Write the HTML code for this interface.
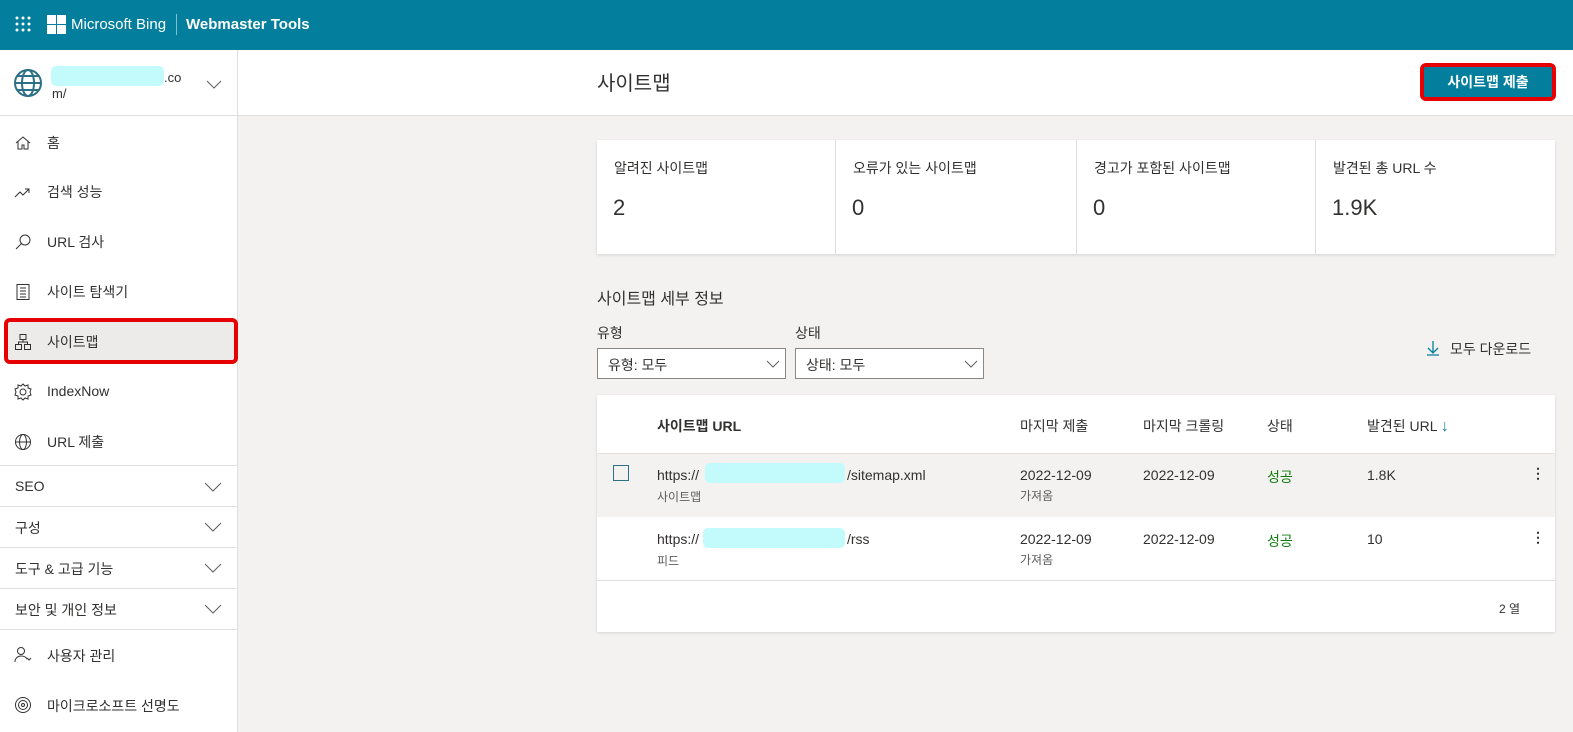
<!DOCTYPE html><html><head><meta charset="utf-8"><style>
*{box-sizing:border-box;margin:0;padding:0}
body{width:1573px;height:732px;overflow:hidden;font-family:"Liberation Sans","Noto Sans CJK KR",sans-serif;background:#f3f2f1;color:#323130;position:relative;font-size:14px}
.a{position:absolute}
.hdr{left:0;top:0;width:1573px;height:50px;background:#037f9d;color:#fff}
.side{left:0;top:50px;width:238px;height:682px;background:#fff;border-right:1px solid #e1dfdd}
.top{left:238px;top:50px;width:1335px;height:66px;background:#fff;border-bottom:1px solid #e1dfdd}
.nav{left:47px;font-size:14px;color:#323130}
.ic{left:14px;width:18px;height:18px}
.hl{left:0;right:0;height:1px;background:#e1dfdd}
.sec{left:15px;font-size:14px}
.chev{left:204px;width:18px;height:10px}
.card{background:#fff;box-shadow:0 1px 3px rgba(0,0,0,.13)}
.blur{background:#c3fbfd;border-radius:5px;height:20px}
.g{color:#107c10}
.sm{font-size:12px;color:#605e5c}
</style></head><body>
<div class="a hdr">
<svg class="a" style="left:14px;top:15px" width="18" height="18" viewBox="0 0 18 18" fill="#fff"><circle cx="3" cy="3" r="1.5"/><circle cx="9" cy="3" r="1.5"/><circle cx="15" cy="3" r="1.5"/><circle cx="3" cy="9" r="1.5"/><circle cx="9" cy="9" r="1.5"/><circle cx="15" cy="9" r="1.5"/><circle cx="3" cy="15" r="1.5"/><circle cx="9" cy="15" r="1.5"/><circle cx="15" cy="15" r="1.5"/></svg>
<svg class="a" style="left:47px;top:15px" width="19" height="19" viewBox="0 0 19 19" fill="#fff"><rect width="9" height="9"/><rect x="10" width="9" height="9"/><rect y="10" width="9" height="9"/><rect x="10" y="10" width="9" height="9"/></svg>
<div class="a" style="left:71px;top:16px;font-size:15px">Microsoft Bing</div>
<div class="a" style="left:176px;top:14px;width:1px;height:21px;background:#7fbfce"></div>
<div class="a" style="left:186px;top:16px;font-size:15px;font-weight:bold">Webmaster Tools</div>
</div>
<div class="a side">
<svg class="a" style="left:13px;top:18px" width="30" height="30" viewBox="0 0 30 30" fill="none" stroke="#2d6f86" stroke-width="2"><circle cx="15" cy="15" r="13"/><ellipse cx="15" cy="15" rx="6" ry="13"/><path d="M2 15h26M4 8h22M4 22h22"/></svg>
<div class="a blur" style="left:51px;top:16px;width:113px"></div>
<div class="a" style="left:164px;top:20px;font-size:13px">.co</div>
<div class="a" style="left:52px;top:36px;font-size:13px">m/</div>
<svg class="a" style="left:206px;top:30px" width="16" height="9" viewBox="0 0 16 9" fill="none" stroke="#605e5c"><path d="M1 1l7 7 7-7"/></svg>
<div class="a hl" style="top:65px"></div>
<svg class="a ic" style="top:84px" viewBox="0 0 18 18" fill="none" stroke="#323130"><path d="M2 9l7-6 7 6M4 7v8h4v-4h2v4h4V7"/></svg><div class="a nav" style="top:83px">홈</div>
<svg class="a ic" style="top:133px" viewBox="0 0 18 18" fill="none" stroke="#323130"><path d="M1 14l5-5 3 3 6-6M11 6h4v4"/></svg><div class="a nav" style="top:132px">검색 성능</div>
<svg class="a ic" style="top:183px" viewBox="0 0 18 18" fill="none" stroke="#323130"><circle cx="11" cy="7" r="5"/><path d="M7.5 10.5L2 16"/></svg><div class="a nav" style="top:182px">URL 검사</div>
<svg class="a ic" style="top:233px" viewBox="0 0 18 18" fill="none" stroke="#323130"><rect x="3" y="1.5" width="12" height="15"/><path d="M6 5h6M6 8h6M6 11h6M6 14h6"/></svg><div class="a nav" style="top:232px">사이트 탐색기</div>
<div class="a" style="left:4px;top:268px;width:234px;height:46px;background:#edebe9;border:4px solid #e60000;border-radius:6px"></div>
<svg class="a ic" style="top:283px" viewBox="0 0 18 18" fill="none" stroke="#323130"><rect x="6" y="1.5" width="6" height="5"/><rect x="1.5" y="11.5" width="6" height="5"/><rect x="10.5" y="11.5" width="6" height="5"/><path d="M9 6.5v2.5M4.5 11.5V9h9v2.5"/></svg><div class="a nav" style="top:282px">사이트맵</div>
<svg class="a ic" style="top:333px" viewBox="0 0 18 18" fill="none" stroke="#323130"><circle cx="9" cy="9" r="3"/><path d="M9 1l2 2 3-1 0 3 3 1-1 3 1 3-3 1 0 3-3-1-2 2-2-2-3 1 0-3-3-1 1-3-1-3 3-1 0-3 3 1z"/></svg><div class="a nav" style="top:333px">IndexNow</div>
<svg class="a ic" style="top:383px" viewBox="0 0 18 18" fill="none" stroke="#323130"><circle cx="9" cy="9" r="7.5"/><ellipse cx="9" cy="9" rx="3.5" ry="7.5"/><path d="M1.5 9h15"/></svg><div class="a nav" style="top:382px">URL 제출</div>
<div class="a hl" style="top:415px"></div>
<div class="a sec" style="top:428px">SEO</div><svg class="a chev" style="top:432px" viewBox="0 0 18 10" fill="none" stroke="#605e5c"><path d="M1 1l8 8 8-8"/></svg>
<div class="a hl" style="top:456px"></div>
<div class="a sec" style="top:468px">구성</div><svg class="a chev" style="top:472px" viewBox="0 0 18 10" fill="none" stroke="#605e5c"><path d="M1 1l8 8 8-8"/></svg>
<div class="a hl" style="top:497px"></div>
<div class="a sec" style="top:509px">도구 &amp; 고급 기능</div><svg class="a chev" style="top:513px" viewBox="0 0 18 10" fill="none" stroke="#605e5c"><path d="M1 1l8 8 8-8"/></svg>
<div class="a hl" style="top:538px"></div>
<div class="a sec" style="top:550px">보안 및 개인 정보</div><svg class="a chev" style="top:554px" viewBox="0 0 18 10" fill="none" stroke="#605e5c"><path d="M1 1l8 8 8-8"/></svg>
<div class="a hl" style="top:579px"></div>
<svg class="a ic" style="top:596px" viewBox="0 0 18 18" fill="none" stroke="#323130"><circle cx="7" cy="5" r="3.5"/><path d="M1 16c0-4 3-6 6-6s5 1 6 3M13 12l2 2 2-2"/></svg><div class="a nav" style="top:596px">사용자 관리</div>
<svg class="a ic" style="top:646px" viewBox="0 0 18 18" fill="none" stroke="#323130"><circle cx="9" cy="9" r="7.5"/><circle cx="9" cy="9" r="4.5"/><circle cx="9" cy="9" r="1.5"/></svg><div class="a nav" style="top:646px">마이크로소프트 선명도</div>
</div>
<div class="a top">
<div class="a" style="left:359px;top:17px;font-size:20px">사이트맵</div>
<div class="a" style="left:1182px;top:13px;width:136px;height:38px;border:4px solid #e60000;border-radius:6px;background:#037f9d;color:#fff;font-weight:bold;font-size:14px;text-align:center;line-height:30px">사이트맵 제출</div>
</div>
<div class="a card" style="left:597px;top:140px;width:958px;height:114px">
<div class="a" style="left:238px;top:0;width:1px;height:114px;background:#e1dfdd"></div>
<div class="a" style="left:479px;top:0;width:1px;height:114px;background:#e1dfdd"></div>
<div class="a" style="left:718px;top:0;width:1px;height:114px;background:#e1dfdd"></div>
<div class="a" style="left:17px;top:18px">알려진 사이트맵</div><div class="a" style="left:16px;top:55px;font-size:22px">2</div>
<div class="a" style="left:256px;top:18px">오류가 있는 사이트맵</div><div class="a" style="left:255px;top:55px;font-size:22px">0</div>
<div class="a" style="left:497px;top:18px">경고가 포함된 사이트맵</div><div class="a" style="left:496px;top:55px;font-size:22px">0</div>
<div class="a" style="left:736px;top:18px">발견된 총 URL 수</div><div class="a" style="left:735px;top:55px;font-size:22px">1.9K</div>
</div>
<div class="a" style="left:597px;top:285px;font-size:16px">사이트맵 세부 정보</div>
<div class="a" style="left:597px;top:323px">유형</div>
<div class="a" style="left:795px;top:323px">상태</div>
<div class="a" style="left:597px;top:348px;width:189px;height:31px;background:#fff;border:1px solid #8a8886;padding:6px 10px">유형: 모두<svg class="a" style="left:168px;top:11px" width="14" height="8" viewBox="0 0 14 8" fill="none" stroke="#605e5c"><path d="M1 1l6 6 6-6"/></svg></div>
<div class="a" style="left:795px;top:348px;width:189px;height:31px;background:#fff;border:1px solid #8a8886;padding:6px 10px">상태: 모두<svg class="a" style="left:168px;top:11px" width="14" height="8" viewBox="0 0 14 8" fill="none" stroke="#605e5c"><path d="M1 1l6 6 6-6"/></svg></div>
<svg class="a" style="left:1426px;top:340px" width="14" height="16" viewBox="0 0 14 16" fill="none" stroke="#037f9d" stroke-width="1.3"><path d="M7 1v12M2 8l5 5 5-5M1 15h12"/></svg>
<div class="a" style="left:1450px;top:339px">모두 다운로드</div>
<div class="a card" style="left:597px;top:395px;width:958px;height:237px">
<div class="a" style="left:60px;top:21px;font-weight:bold">사이트맵 URL</div>
<div class="a" style="left:423px;top:21px">마지막 제출</div>
<div class="a" style="left:546px;top:21px">마지막 크롤링</div>
<div class="a" style="left:670px;top:21px">상태</div>
<div class="a" style="left:770px;top:21px">발견된 URL <span style="color:#037f9d;font-size:16px">↓</span></div>
<div class="a" style="left:0;top:58px;width:958px;height:64px;background:#f3f2f1;border-top:1px solid #e1dfdd"></div>
<div class="a" style="left:16px;top:70px;width:16px;height:16px;border:1.5px solid #2d6f86"></div>
<div class="a" style="left:60px;top:72px">https://</div><div class="a blur" style="left:108px;top:68px;width:140px"></div><div class="a" style="left:250px;top:72px">/sitemap.xml</div>
<div class="a sm" style="left:60px;top:93px">사이트맵</div>
<div class="a" style="left:423px;top:72px">2022-12-09</div><div class="a sm" style="left:423px;top:92px">가져옴</div>
<div class="a" style="left:546px;top:72px">2022-12-09</div>
<div class="a g" style="left:670px;top:72px">성공</div>
<div class="a" style="left:770px;top:72px">1.8K</div>
<div class="a" style="left:934px;top:70px;font-weight:bold">⋮</div>
<div class="a" style="left:60px;top:136px">https://</div><div class="a blur" style="left:106px;top:133px;width:142px"></div><div class="a" style="left:250px;top:136px">/rss</div>
<div class="a sm" style="left:60px;top:157px">피드</div>
<div class="a" style="left:423px;top:136px">2022-12-09</div><div class="a sm" style="left:423px;top:156px">가져옴</div>
<div class="a" style="left:546px;top:136px">2022-12-09</div>
<div class="a g" style="left:670px;top:136px">성공</div>
<div class="a" style="left:770px;top:136px">10</div>
<div class="a" style="left:934px;top:134px;font-weight:bold">⋮</div>
<div class="a" style="left:0;top:185px;width:958px;height:1px;background:#e1dfdd"></div>
<div class="a" style="left:902px;top:205px;font-size:12px">2 열</div>
</div>
</body></html>
